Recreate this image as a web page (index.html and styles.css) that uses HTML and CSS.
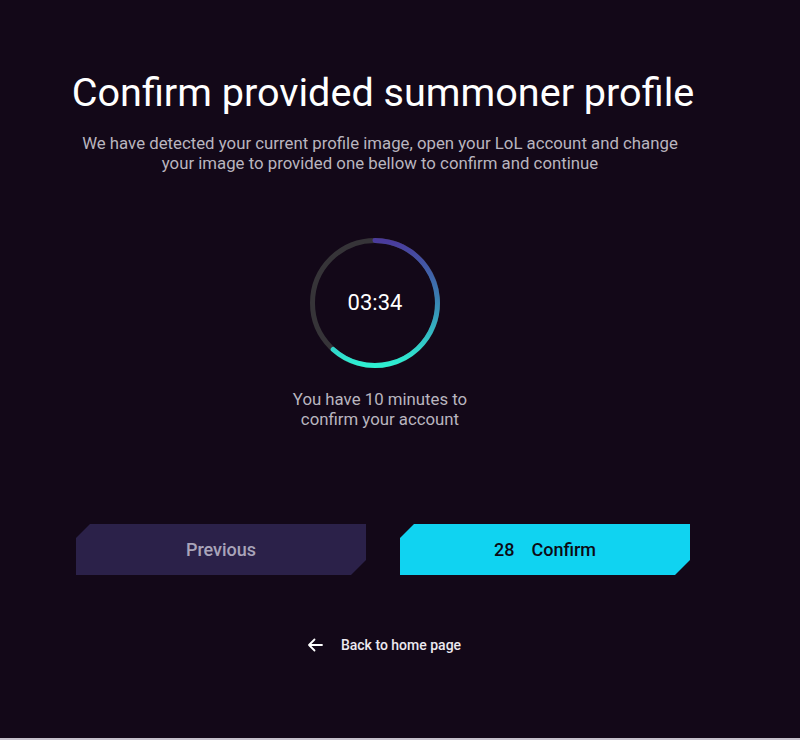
FILE: index.html
```html
<!DOCTYPE html>
<html lang="en">
<head>
<meta charset="utf-8">
<title>Confirm summoner profile</title>
<link rel="stylesheet" href="styles.css">
</head>
<body>
<main class="page">
  <h1 class="title">Confirm provided summoner profile</h1>
  <p class="subtitle">We have detected your current profile image, open your LoL account and change<br>your image to provided one bellow to confirm and continue</p>

  <div class="timer">
    <svg class="ring" width="134" height="134" viewBox="0 0 134 134">
      <defs>
        <linearGradient id="arc" x1="0" y1="0" x2="0" y2="1">
          <stop offset="0" stop-color="#4a3a9c"/>
          <stop offset="0.45" stop-color="#3a7db2"/>
          <stop offset="1" stop-color="#2ef0d2"/>
        </linearGradient>
      </defs>
      <circle cx="67" cy="67" r="62.5" fill="none" stroke="#363438" stroke-width="5"/>
      <path d="M67 4.5 A62.5 62.5 0 1 1 25.2 113.5" fill="none" stroke="url(#arc)" stroke-width="5" stroke-linecap="round"/>
    </svg>
    <span class="time">03:34</span>
  </div>

  <p class="note">You have 10 minutes to<br>confirm your account</p>

  <div class="actions">
    <button class="btn btn-prev">Previous</button>
    <button class="btn btn-confirm"><span class="count">28</span><span>Confirm</span></button>
  </div>

  <a class="back" href="#">
    <svg width="16" height="14" viewBox="0 0 16 14"><path d="M15 7H2M7.5 1.5L2 7l5.5 5.5" fill="none" stroke="#ffffff" stroke-width="1.8" stroke-linecap="round" stroke-linejoin="round"/></svg>
    <span>Back to home page</span>
  </a>
</main>
</body>
</html>
```

FILE: styles.css
```css
html {
  background: #c6c2cc;
}
body {
  margin: 0;
  height: 738px;
  background: #130818;
  font-family: Roboto, "Liberation Sans", sans-serif;
  overflow: hidden;
}
.page {
  width: 766px;
  display: flex;
  flex-direction: column;
  align-items: center;
  padding-top: 70px;
}
.title {
  margin: 0;
  color: #ffffff;
  font-size: 39.6px;
  font-weight: 400;
  line-height: 46px;
}
.subtitle {
  margin: 17px 6px 0 0;
  color: #b9b5bf;
  font-size: 16.8px;
  line-height: 20px;
  text-align: center;
}
.timer {
  margin-top: 63px;
  margin-right: 16px;
  width: 134px;
  height: 134px;
  display: grid;
  place-items: center;
}
.ring, .time {
  grid-area: 1 / 1;
}
.time {
  color: #ffffff;
  font-size: 22px;
  line-height: 26px;
}
.note {
  margin: 19px 6px 0 0;
  color: #b9b5bf;
  font-size: 16.8px;
  line-height: 20px;
  text-align: center;
}
.actions {
  margin-top: 95px;
  display: flex;
  gap: 34px;
}
.btn {
  width: 290px;
  height: 51px;
  border: 0;
  font-family: Roboto, "Liberation Sans", sans-serif;
  font-size: 18px;
  font-weight: 500;
  display: flex;
  align-items: center;
  justify-content: center;
  gap: 17px;
  clip-path: polygon(14px 0, 100% 0, 100% calc(100% - 15px), calc(100% - 15px) 100%, 0 100%, 0 14px);
  cursor: pointer;
}
.btn-prev {
  background: #2b2149;
  color: #a9a4ba;
}
.btn-confirm {
  background: #10d3f1;
  color: #0c0a14;
}
.back {
  margin-top: 62px;
  margin-left: 2px;
  display: flex;
  align-items: center;
  gap: 18px;
  color: #ece9f0;
  font-size: 14px;
  font-weight: 500;
  text-decoration: none;
}
.back svg {
  display: block;
}
```
